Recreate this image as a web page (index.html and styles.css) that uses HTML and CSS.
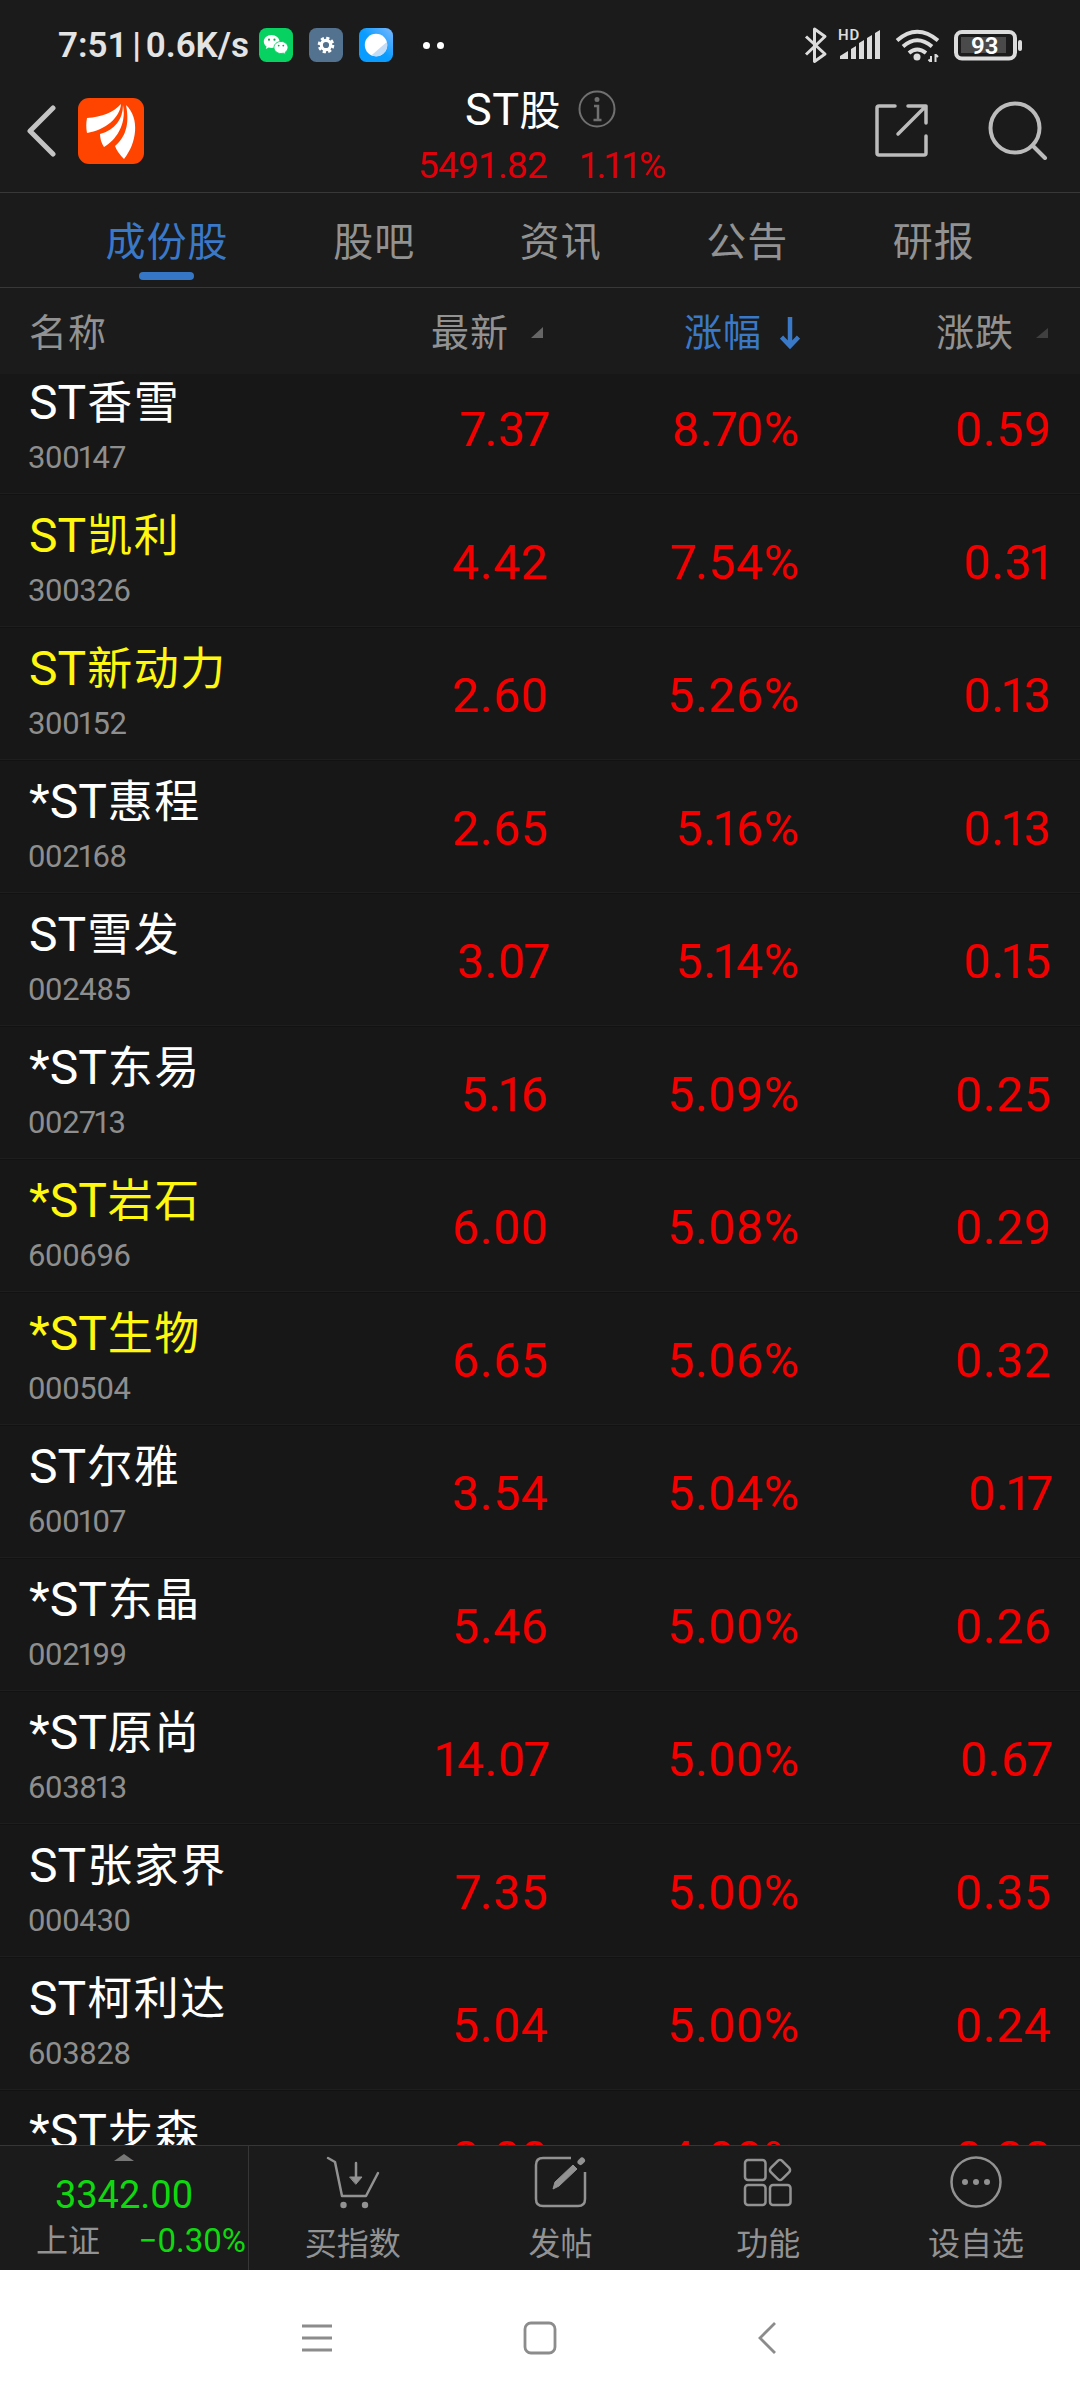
FILE: index.html
```html
<!DOCTYPE html>
<html lang="zh-CN">
<head>
<meta charset="utf-8">
<title>ST股</title>
<link rel="stylesheet" href="styles.css">
</head>
<body>
<div class="screen">
  <div class="status">
    <span class="clock">7:51 | 0.6K/s</span>
    <svg class="app-icon" viewBox="0 0 34 34"><rect width="34" height="34" rx="7.5" fill="#07d160"/><path d="M12.5 7C8 7 4.800 10 4.800 13.500c0 2 1 3.800 2.700 5l-.7 2.500 2.900-1.400c.9.2 1.800.4 2.800.4 4.500 0 8-3 8-6.500S17 7 12.500 7z" fill="#fff"/><path d="M22 13.500c-4 0-7 2.700-7 6s3 6 7 6c.8 0 1.600-.1 2.300-.3l2.500 1.300-.6-2.200c1.700-1.100 2.800-2.900 2.800-4.800 0-3.300-3-6-7-6z" fill="#fff" stroke="#07d160" stroke-width=".9"/><g fill="#07a84c"><circle cx="10" cy="11.700" r="1.100"/><circle cx="15.500" cy="11.700" r="1.100"/><circle cx="19.700" cy="17.600" r=".9"/><circle cx="24.300" cy="17.600" r=".9"/></g></svg>
    <svg class="app-icon" viewBox="0 0 34 34"><rect width="34" height="34" rx="7.500" fill="#53728f"/><circle cx="17" cy="17" r="4.700" fill="none" stroke="#fff" stroke-width="3.200"/><circle cx="17" cy="17" r="7" fill="none" stroke="#fff" stroke-width="2.600" stroke-dasharray="3.200 2.298"/></svg>
    <svg class="app-icon" viewBox="0 0 34 34"><defs><linearGradient id="sky" x1="0" y1="1" x2="1" y2="0"><stop offset=".5" stop-color="#0a9dff"/><stop offset="1" stop-color="#7db8ff"/></linearGradient></defs><rect width="34" height="34" rx="7.500" fill="url(#sky)"/><circle cx="17" cy="17" r="11.200" fill="#fff"/><path d="M27.800 14A11.200 11.200 0 0 1 12.500 27.300z" fill="#c4dcf5"/></svg>
    <i class="more-dot first"></i><i class="more-dot"></i>
    <svg class="system-icons" width="222" height="38" viewBox="802 26 222 38" fill="none" stroke="#dcdcdc" stroke-width="3">
      <path d="M806 36.500 825 54l-10.500 7.500V29L825 36.500 806 54.500" stroke-linejoin="round"/>
      <text x="838" y="40" class="hd" stroke="none">HD</text>
      <g fill="#dcdcdc" stroke="none"><path d="M840 56l8-5v8h-8zM851 49l5-3v13h-5zM859 43l5-3v19h-5zM867 38l5-3v24h-5zM875 33l5-3v29h-5z"/><circle cx="917" cy="57" r="3.500"/></g>
      <path d="M897 40.500Q917 23 938 40.500M903 46.500Q917 34 932 46.500M909 53Q917 46 926 53" stroke-width="3.900"/>
      <path d="M931 62v-6M935.500 54v8M938 57l-2-2M928.500 59.500l2 2" stroke-width="2"/>
      <rect x="956" y="32" width="59" height="26.500" rx="6" stroke-width="4"/><rect x="961" y="37" width="45" height="16" fill="#4a4a4a" stroke="none"/>
      <path d="M1020 42v7" stroke-width="4" stroke-linecap="round"/>
      <text x="971" y="53.500" class="battery" stroke="none">93</text>
    </svg>
  </div>

  <header class="header">
    <svg class="back" width="30" height="52" viewBox="0 0 30 52"><path d="M26 3 3 26l23 23" fill="none" stroke="#c4c4c4" stroke-width="5" stroke-linecap="round" stroke-linejoin="round"/></svg>
    <svg class="brand" width="66" height="66" viewBox="0 0 66 66"><rect width="66" height="66" rx="11" fill="#ff4400"/><g fill="#fff"><path d="M9 20C24 19 36 14 43 6C42 20 27 32 9 35C8 30 8 25 9 20z"/><path d="M45 7C49 27 37 43 26 49Q22 43 22 36C37 32 45 21 45 7z"/><path d="M48 7C62 20 59 45 46 61Q39 54 37 48C50 37 51 22 48 7z"/></g></svg>
    <div class="heading">
      <div class="title-row"><h1><span class="latin">ST</span>股</h1><svg width="38" height="38" viewBox="0 0 38 38" fill="none" stroke="#707070" stroke-width="2"><circle cx="19" cy="19" r="17.500"/><path d="M16 16h4v13.500M15.500 30h8" stroke-width="2.500"/><circle cx="19" cy="9.500" r="1.500" fill="#707070"/></svg></div>
      <div class="index-row"><span>5491.82</span><span class="index-pct">1.11%</span></div>
    </div>
    <svg class="share" width="54" height="56" viewBox="0 0 54 56" fill="none" stroke="#bcbcbc" stroke-width="3.500" stroke-linecap="round" stroke-linejoin="round"><path d="M20 3H4Q2 3 2 5V50Q2 52 4 52H49Q51 52 51 50V33M33 3H51V20M51 3 23 31"/></svg>
    <svg class="search" width="60" height="60" viewBox="0 0 60 60" fill="none" stroke="#bcbcbc" stroke-width="4" stroke-linecap="round"><circle cx="27" cy="28" r="24.500"/><path d="M44.500 45.500 57 58"/></svg>
  </header>

  <nav class="tabs">
    <a class="tab active">成份股</a><a class="tab">股吧</a><a class="tab">资讯</a><a class="tab">公告</a><a class="tab">研报</a>
  </nav>

  <div class="columns">
    <span>名称</span>
    <span class="col-price">最新<svg width="12" height="12" viewBox="0 0 12 12"><path d="M12 0v11H0z" fill="#666"/></svg></span>
    <span class="col-pct sorted">涨幅<svg width="20" height="34" viewBox="0 0 20 34" fill="none" stroke="#3a78c8" stroke-width="4.500"><path d="M10 1v29M1.500 21 10 30l8.500-9"/></svg></span>
    <span class="col-diff">涨跌<svg width="12" height="12" viewBox="0 0 12 12"><path d="M12 1v10H0z" fill="#404040"/></svg></span>
  </div>

  <main class="list" id="list"></main>

  <footer class="bottom">
    <div class="market">
      <i class="up"></i>
      <div class="market-value">3342.00</div>
      <div class="market-row"><span class="market-name">上证</span><span class="market-pct">−0.30%</span></div>
    </div>
    <div class="action"><svg width="54" height="54" viewBox="0 0 54 54" fill="none" stroke="#929292" stroke-width="2.500" stroke-linecap="round" stroke-linejoin="round"><path d="M2 2 9 6 16 40H40L52 17"/><path d="M30 7v16"/><path d="M24 21h12l-6 7z" fill="#929292" stroke-width="1"/><g fill="#929292" stroke="none"><circle cx="17.500" cy="49" r="3.200"/><circle cx="39" cy="49" r="3.200"/></g></svg><span>买指数</span></div>
    <div class="action"><svg width="54" height="54" viewBox="0 0 54 54" fill="none" stroke="#929292" stroke-width="2.500"><path d="M37 2H9Q2 2 2 9V43Q2 50 9 50H44Q51 50 51 43V16"/><path d="M19 33 21 26 39 9 43 13 25 30z" fill="#929292" stroke-width="1"/><path d="M46.500 6 48 4.500" stroke-width="6" stroke-linecap="round"/></svg><span>发帖</span></div>
    <div class="action"><svg width="54" height="54" viewBox="0 0 54 54" fill="none" stroke="#929292" stroke-width="2.500"><rect x="4" y="4" width="20.500" height="20" rx="3"/><rect x="4" y="29" width="20.500" height="20" rx="3"/><rect x="29" y="29" width="20.500" height="20" rx="3"/><rect x="31" y="6" width="16" height="16" rx="3" transform="rotate(45 39 14)"/></svg><span>功能</span></div>
    <div class="action"><svg width="54" height="54" viewBox="0 0 54 54"><circle cx="27" cy="26" r="24.500" fill="none" stroke="#929292" stroke-width="2.500"/><g fill="#929292"><circle cx="16" cy="26" r="3"/><circle cx="27" cy="26" r="3"/><circle cx="38" cy="26" r="3"/></g></svg><span>设自选</span></div>
  </footer>

  <div class="system-nav">
    <svg width="32" height="34" viewBox="0 0 32 34" stroke="#8c8c8c" stroke-width="2.800"><path d="M1 5h30M1 17h30M1 29h30"/></svg>
    <svg width="34" height="34" viewBox="0 0 34 34" fill="none" stroke="#8c8c8c" stroke-width="2.800"><rect x="2" y="2" width="30" height="30" rx="6"/></svg>
    <svg width="20" height="34" viewBox="0 0 20 34" fill="none" stroke="#8c8c8c" stroke-width="2.800"><path d="M18 2 3 17l15 15"/></svg>
  </div>
</div>
<script src="list.js"></script>
</body>
</html>
```
FILE: styles.css
```css
* { box-sizing: border-box; }
body { margin: 0; background: #1b1b1b; font-family: Roboto, "Noto Sans CJK SC", sans-serif; }
.screen { width: 1080px; height: 2400px; overflow: hidden; display: flex; flex-direction: column; color: #929292; }
.screen > * { flex: none; }
svg { display: block; flex: none; }

.status { height: 90px; padding: 0 56px 0 58px; display: flex; align-items: center; }
.clock { width: 201px; font-size: 35px; font-weight: 600; color: #e4e4e4; white-space: pre; word-spacing: -4px; }
.app-icon { width: 34px; height: 34px; margin-right: 16px; }
.more-dot { width: 7px; height: 7px; border-radius: 50%; background: #fff; margin-left: 7px; }
.more-dot.first { margin-left: 14px; }
.system-icons { margin-left: auto; }
.hd { font-size: 15px; font-weight: 600; fill: #dcdcdc; letter-spacing: 1px; }
.battery { font-size: 24px; font-weight: 600; fill: #fff; }

.header { height: 103px; border-bottom: 1px solid #383838; display: flex; }
.back { margin: 15px 0 0 27px; }
.brand { margin: 8px 0 0 21px; }
.heading { width: 280px; margin: 0 0 0 256px; }
.title-row { display: flex; align-items: center; height: 40px; margin-left: 65px; }
h1 { margin: 0 16px 0 0; width: 97px; font-size: 41px; font-weight: 400; color: #fff; line-height: 40px; white-space: nowrap; display: flex; align-items: baseline; }
h1 .latin { font-size: 45px; letter-spacing: .5px; }
.title-row svg { margin-top: -2px; }
.index-row { display: flex; justify-content: space-between; padding: 0 20px 0 18px; line-height: 44px; height: 44px; margin-top: 14px; font-size: 37px; color: #df000a; white-space: nowrap; }
.index-row span:first-child { letter-spacing: -.8px; }
.index-row .index-pct { letter-spacing: -3px; margin-right: -3px; }
.share { margin: 13px 0 0 195px; }
.search { margin: 10px 0 0 59px; }

.tabs { height: 95px; border-bottom: 1px solid #383838; padding: 0 53px 0 62px; display: flex; font-size: 40px; letter-spacing: 1px; }
.tab { flex: none; width: 186.500px; height: 94px; line-height: 99px; text-align: center; position: relative; }
.tab.active { width: 219px; padding-right: 9px; color: #3a78c8; }
.tab.active::after { content: ""; position: absolute; left: 77px; top: 79px; width: 55px; height: 8px; border-radius: 4px; background: #3577c6; }

.columns, .row { display: grid; grid-template-columns: 278px 240px 251px 252px; padding-left: 29px; }
.columns { height: 86px; overflow: hidden; font-size: 38px; letter-spacing: 1px; line-height: 90px; white-space: nowrap; }
.columns span { display: flex; align-items: center; height: 90px; }
.col-price { padding-left: 124px; gap: 22px; }
.col-pct { padding-left: 137px; gap: 18px; }
.col-diff { padding-left: 138px; gap: 22px; }
.sorted { color: #3a78c8; }

.list { height: 1771px; overflow: hidden; background: #171717; }
.row { height: 133px; border-top: 1px solid #121212; border-bottom: 1px solid #1e1e1e; }
.row:first-child { margin-top: -13px; }
.name { height: 56px; margin-top: 13px; line-height: 56px; font-size: 45px; letter-spacing: 1.500px; color: #fff; white-space: nowrap; display: flex; align-items: baseline; }
.name .latin { font-size: 48px; letter-spacing: 0; margin-right: 1px; }
.watched { color: #fff70f; }
.code { height: 40px; margin: 7px 0 0 -1px; line-height: 40px; font-size: 31px; letter-spacing: -.3px; color: #8e8e8e; }
.num { text-align: right; font-size: 48px; line-height: 135px; color: #f20000; letter-spacing: .7px; margin-right: -1.500px; white-space: nowrap; }
.one { margin: 0 -.085em 0 -.09em; }
.seven { margin: 0 -.05em; }
.code .one { margin: 0 -.065em; }
.code .seven { margin: 0 -.02em; }

.bottom { height: 125px; background: #1b1b1b; border-top: 1px solid #363636; display: flex; }
.market { width: 249px; border-right: 1px solid #363636; position: relative; }
.up { position: absolute; left: 114px; top: 8px; border: 10px solid transparent; border-top: 0; border-bottom: 7px solid #777; }
.market-value { margin-top: 27px; line-height: 44px; font-size: 38px; color: #10d810; text-align: center; }
.market-row { display: flex; justify-content: space-between; padding: 0 2px 0 36px; line-height: 48px; font-size: 32px; white-space: nowrap; }
.market-pct { font-size: 33px; color: #10d810; }
.action { flex: 1; display: flex; flex-direction: column; align-items: center; padding-top: 10px; font-size: 32px; line-height: 50px; }
.action svg { margin-bottom: 9px; }

.system-nav { height: 130px; background: #fff; display: flex; padding: 51px 0 0 301px; }
.system-nav svg:nth-child(2) { margin-left: 190px; }
.system-nav svg:nth-child(3) { margin-left: 200px; }
```
FILE: list.js
```js
const stocks = [
  ["ST", "香雪", "300147", "7.37", "8.70%", "0.59"],
  ["ST", "凯利", "300326", "4.42", "7.54%", "0.31", true],
  ["ST", "新动力", "300152", "2.60", "5.26%", "0.13", true],
  ["*ST", "惠程", "002168", "2.65", "5.16%", "0.13"],
  ["ST", "雪发", "002485", "3.07", "5.14%", "0.15"],
  ["*ST", "东易", "002713", "5.16", "5.09%", "0.25"],
  ["*ST", "岩石", "600696", "6.00", "5.08%", "0.29", true],
  ["*ST", "生物", "000504", "6.65", "5.06%", "0.32", true],
  ["ST", "尔雅", "600107", "3.54", "5.04%", "0.17"],
  ["*ST", "东晶", "002199", "5.46", "5.00%", "0.26"],
  ["*ST", "原尚", "603813", "14.07", "5.00%", "0.67"],
  ["ST", "张家界", "000430", "7.35", "5.00%", "0.35"],
  ["ST", "柯利达", "603828", "5.04", "5.00%", "0.24"],
  ["*ST", "步森", "002569", "8.00", "4.99%", "0.38"]
];
// Proportional figures: narrow the sidebearings of 1 and 7.
const figures = s => s.replace(/[17]/g, d => `<span class="${d === "1" ? "one" : "seven"}">${d}</span>`);
document.getElementById("list").innerHTML = stocks.map(([prefix, name, code, price, pct, diff, watched]) => `
  <div class="row">
    <div><div class="name${watched ? " watched" : ""}"><span class="latin">${prefix}</span>${name}</div><div class="code">${figures(code)}</div></div>
    <div class="num">${figures(price)}</div><div class="num">${figures(pct)}</div><div class="num">${figures(diff)}</div>
  </div>`).join("");
```
